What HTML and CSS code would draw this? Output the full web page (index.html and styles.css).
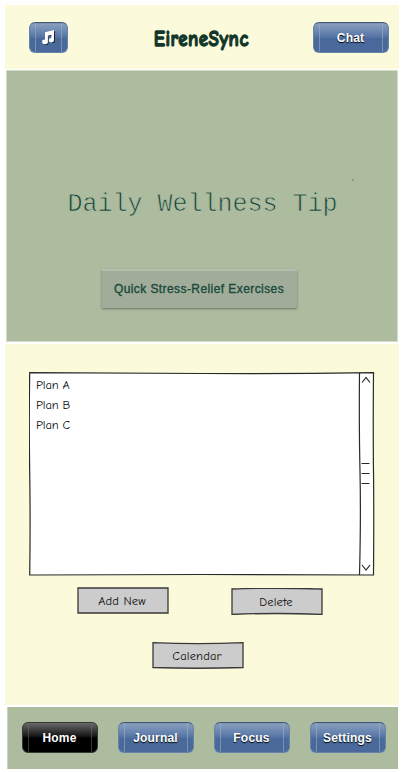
FILE: index.html
```html
<!DOCTYPE html>
<html lang="en">
<head>
<meta charset="utf-8">
<title>EireneSync</title>
<link rel="stylesheet" href="styles.css">
</head>
<body>
<div class="app">
  <header class="header">
    <button class="glossy music" aria-label="Music"><svg width="14" height="15" viewBox="0 0 14 15"><g class="note-shadow"><path d="M4 2.3 13 0v10.2a2.4 2 0 1 1-2.4-2V4.4L6.4 5.5v6.2A2.6 2.1 0 1 1 4 9.9Z"/></g><path fill="#fff" d="M4 2.300 13 0v10.200a2.600 2.200 0 1 1-2.600-2.200V4.800L6.900 5.700v6A2.900 2.300 0 1 1 4 9.600Z"/></svg></button>
    <h1 class="brand"><span>EireneSync</span></h1>
    <button class="glossy">Chat</button>
  </header>
  <section class="hero">
    <i class="speck"></i>
    <h2 class="tip">Daily Wellness Tip</h2>
    <button class="relief"><span>Quick Stress-Relief Exercises</span></button>
  </section>
  <main class="plans">
    <div class="list">
      <svg class="frame" width="347" height="205" viewBox="0 0 347 205">
        <path class="paper" d="M.7 .7Q90 1 173 1.500T344.500 .7Q344 60 344.500 100T344.500 203Q260 202.500 173 202.500T.7 203Q1.500 150 .7 100T.7 .7Z"/>
        <path d="M330.500 1Q330 55 331 100T330.500 203"/>
        <path d="m333 10.500 4-5 4 5M333 193l4 5 4-5M332.500 91.500h8M332.500 101.500h8M332.500 111.500h8"/>
      </svg>
      <ul class="items"><li>Plan A</li><li>Plan B</li><li>Plan C</li></ul>
    </div>
    <div class="actions">
      <button class="sketch"><svg width="92" height="27" viewBox="0 0 92 27"><path d="M1 1H91V26H1Z"/></svg><span>Add New</span></button>
      <button class="sketch delete"><svg width="92" height="27" viewBox="0 0 92 27"><path d="M1 1Q46-.5 91 1V26.500Q46 24.500 1 26.500Z"/></svg><span>Delete</span></button>
    </div>
    <button class="sketch calendar"><svg width="92" height="27" viewBox="0 0 92 27"><path d="M1 .7Q46 2.500 91 .7V25.500Q46 27 1 25.500Z"/></svg><span>Calendar</span></button>
  </main>
  <nav class="nav">
    <button class="glossy active">Home</button>
    <button class="glossy">Journal</button>
    <button class="glossy">Focus</button>
    <button class="glossy">Settings</button>
  </nav>
</div>
</body>
</html>
```
FILE: styles.css
```css
* { box-sizing: border-box; }
body { margin: 0; background: #fff; font-family: "Liberation Sans", sans-serif; }
button { padding: 0; margin: 0; border: 0; background: none; font: inherit; }
.app { width: 404px; height: 772px; padding: 5px 5px 0 5px; overflow: hidden; }
.header { height: 64px; background: #fbfadb; display: flex; align-items: flex-start; justify-content: space-between; padding: 17px 10px 0 24px; }
.brand { margin: 0 0 0 21px; width: 97px; height: 34px; display: flex; justify-content: center; color: #12372a; font: 700 22px/34px "Comic Neue", "Comic Sans MS", "Open Sans", sans-serif; }
.brand span { transform: scaleX(.86); white-space: nowrap; letter-spacing: .6px; -webkit-text-stroke: 1.3px #12372a; }
.glossy {
  position: relative; width: 76px; height: 31px; flex: none;
  display: flex; align-items: center; justify-content: center;
  border: 1px solid #6482ab; border-top-color: #46597a; border-radius: 6px;
  background: linear-gradient(#758bab 0, #869cbc 5%, #5675a6 48%, #48699a 54%, #4a6a9b 100%);
  color: #fff; font: bold 12px/28px "Liberation Sans", sans-serif; letter-spacing: .2px; text-shadow: 0 1px 1px #000; padding-right: 1px;
}
.glossy::before { content: ""; position: absolute; inset: 0 5px; border: solid rgba(155,180,195,.55); border-width: 0 1px; }
.music { width: 39px; }
.music svg { overflow: visible; }
.note-shadow { fill: #17243a; transform: translate(1px, 1px); }
.active { background: linear-gradient(#686868 0, #151515 46%, #000 52%); border-color: #353b34; }
.active::before { border-color: rgba(120,125,120,.45); }
.hero { position: relative; margin: 1px 1px 0 1px; height: 272px; background: #adbb9f; border: 1px solid #d3dccb; display: flex; flex-direction: column; align-items: center; }
.speck { position: absolute; left: 345px; top: 108px; width: 2px; height: 2px; background: #81977e; border-radius: 1px; }
.tip { margin: 118px 0 0 1px; color: #12443b; font: 400 25px/32px "Liberation Mono", monospace; white-space: pre; -webkit-text-stroke: .75px #adbb9f; }
.relief { margin: 48px 0 0 -6px; width: 195px; height: 39px; background: #a2ac9b; border-top: 2px solid #b3beac; box-shadow: 0 1px 2px #697466; color: #174a3a; font: 12px/36px "Liberation Sans", sans-serif; letter-spacing: .42px; -webkit-text-stroke: .35px #174a3a; white-space: nowrap; }
.relief span { position: relative; top: -1px; }
.plans { margin-top: 2px; height: 361px; background: #fbfadb; padding: 28px 24px 0; }
.list { position: relative; width: 346px; height: 204px; }
.frame { position: absolute; inset: 0; fill: none; stroke: #292929; stroke-width: 1.2; }
.paper { fill: #fff; }
.items { position: relative; list-style: none; margin: 0; padding: 3px 0 0 7px; color: #111; font: 12.5px/20px "Comic Sans MS", "Comic Neue", Lato, sans-serif; letter-spacing: -.15px; }
.actions { display: flex; justify-content: space-between; width: 246px; margin: 11px 0 0 48px; }
.sketch { position: relative; width: 92px; height: 27px; display: block; color: #111; font: 12.5px/28px "Comic Sans MS", "Comic Neue", Lato, sans-serif; letter-spacing: .15px; text-align: center; }
.sketch svg { position: absolute; inset: 0; fill: #ccc; stroke: #393939; stroke-width: 1.3; }
.sketch span { position: relative; left: -1px; }
.delete { margin-top: 1px; }
.calendar { margin: 27px 0 0 123px; }
.nav { margin: 2px 1px 0 2px; height: 62px; background: #adbb9f; display: flex; gap: 20px; padding: 15px 0 0 14px; border-left: 1px solid #c9d2c0; }
```
